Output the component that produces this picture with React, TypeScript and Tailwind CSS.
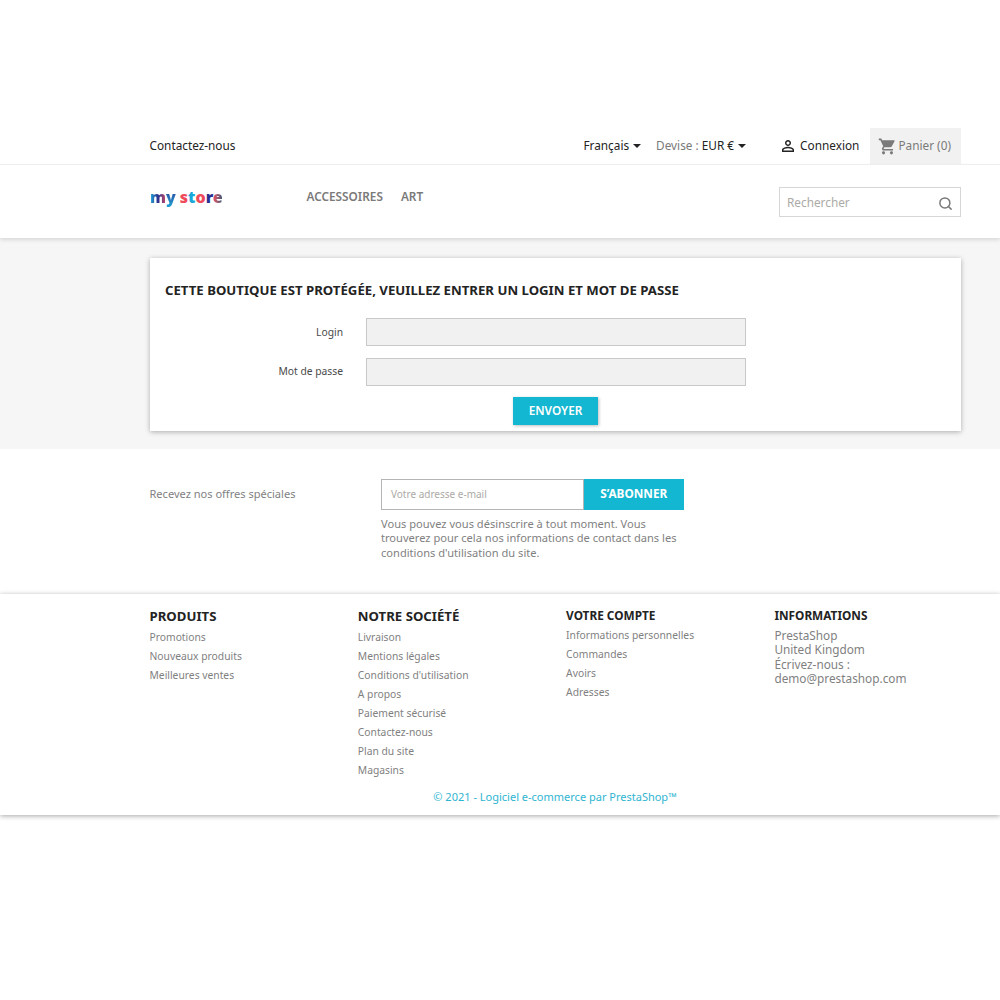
import React from 'react';
import { Search } from 'lucide-react';

const Caret: React.FC = () => (
  <span className="ml-[4px] inline-block h-0 w-0 border-x-[4px] border-t-[4px] border-x-transparent border-t-[#232323] align-[2px]" />
);

const UserIcon: React.FC = () => (
  <svg viewBox="0 0 24 24" className="h-[18px] w-[18px] fill-[#232323]">
    <path d="M12 5.9a2.1 2.1 0 1 1 0 4.2 2.1 2.1 0 0 1 0-4.2m0 9c2.97 0 6.1 1.46 6.1 2.1v1.1H5.9V17c0-.64 3.13-2.1 6.1-2.1M12 4C9.79 4 8 5.79 8 8s1.79 4 4 4 4-1.79 4-4-1.79-4-4-4zm0 9c-2.67 0-8 1.34-8 4v3h16v-3c0-2.66-5.33-4-8-4z" />
  </svg>
);

const CartIcon: React.FC = () => (
  <svg viewBox="0 0 24 24" className="h-[19px] w-[19px] fill-[#7a7a7a]">
    <path d="M7 18c-1.1 0-1.99.9-1.99 2S5.9 22 7 22s2-.9 2-2-.9-2-2-2zM1 2v2h2l3.6 7.59-1.35 2.45c-.16.28-.25.61-.25.96 0 1.1.9 2 2 2h12v-2H7.42c-.14 0-.25-.11-.25-.25l.03-.12.9-1.63h7.45c.75 0 1.41-.41 1.75-1.03l3.58-6.49A1 1 0 0 0 20.01 4H5.21l-.94-2H1zm16 16c-1.1 0-1.99.9-1.99 2s.89 2 1.99 2 2-.9 2-2-.9-2-2-2z" />
  </svg>
);

const Logo: React.FC = () => (
  <span className="font-['Noto_Sans'] text-[16px] leading-none font-black">
    <span className="bg-linear-to-r from-[#18a7d8] via-[#27308f] to-[#c8395f] bg-clip-text text-transparent">m</span>
    <span className="bg-linear-to-b from-[#27308f] to-[#18a7d8] bg-clip-text text-transparent">y</span>
    <span className="inline-block w-[4px]" />
    <span className="text-[#ef4a5c]">s</span>
    <span className="text-[#18a7d8]">t</span>
    <span className="text-[#ef4a5c]">o</span>
    <span className="text-[#27308f]">r</span>
    <span className="bg-linear-to-r from-[#ef4a5c] to-[#1f4f78] bg-clip-text text-transparent">e</span>
  </span>
);

const FooterLinks: React.FC<{ title: string; big?: boolean; links: string[] }> = ({ title, big, links }) => (
  <div className="w-[208.3px]">
    <h4 className={big ? 'pt-[11.5px] text-[13.2px] leading-[20px] font-bold text-[#232323]' : 'pt-[10.5px] text-[11.8px] leading-[20px] font-bold text-[#232323]'}>
      {title}
    </h4>
    <ul className={big ? 'pt-[2px] text-[10.3px] leading-[19px] text-[#7f7f7f]' : 'pt-[1px] text-[10.3px] leading-[19px] text-[#7f7f7f]'}>
      {links.map((l) => (
        <li key={l}>{l}</li>
      ))}
    </ul>
  </div>
);

const Field: React.FC<{ label: string }> = ({ label }) => (
  <div className="flex h-[28px] items-center">
    <label className="w-[178px] pt-[1px] text-right text-[10.3px] text-[#4a4a4a]">{label}</label>
    <div className="ml-[23px] h-[28px] w-[379.5px] border border-[#c8c8c8] bg-[#f1f1f1]" />
  </div>
);

const App: React.FC = () => {
  return (
    <div className="min-h-[1000px] w-[1000px] overflow-hidden bg-white font-['Noto_Sans',sans-serif]">
      <div className="h-[128px]" />

      {/* top nav */}
      <div className="h-[37px] border-b border-[#f1f1f1]">
        <div className="flex h-[36px] items-center pl-[149.5px] text-[11.8px] text-[#232323]">
          <span>Contactez-nous</span>
          <span className="ml-[348px]">Français<Caret /></span>
          <span className="ml-[15px] text-[#7a7a7a]">
            Devise : <span className="text-[#232323]">EUR €</span><Caret />
          </span>
          <span className="ml-[33px] flex items-center gap-[3px]">
            <UserIcon />
            <span>Connexion</span>
          </span>
          <div className="ml-[11px] flex h-[36px] w-[91px] items-center gap-[1px] bg-[#f1f1f1] pl-[8px] text-[#7a7a7a]">
            <CartIcon />
            <span>Panier (0)</span>
          </div>
        </div>
      </div>

      {/* header */}
      <div className="relative flex h-[73px] bg-white pl-[150px] shadow-[0_2px_4px_rgba(0,0,0,0.12)]">
        <div className="w-[156.5px] pt-[20px]">
          <Logo />
        </div>
        <nav className="flex gap-[18px] pt-[23px] text-[11.8px] leading-[16px] font-semibold text-[#7a7a7a]">
          <span>ACCESSOIRES</span>
          <span>ART</span>
        </nav>
        <div className="mt-[22px] mr-[39px] ml-auto flex h-[30px] w-[182px] items-center justify-between border border-[#d6d6d6] px-[7px] text-[11.8px] text-[#acaaa6]">
          <span className="pt-[1px]">Rechercher</span>
          <Search size={15} strokeWidth={2.4} className="mt-[2px] text-[#7a7a7a]" />
        </div>
      </div>

      {/* protected form */}
      <div className="h-[211px] bg-[#f6f6f6] pl-[150px] pt-[20px]">
        <div className="h-[173px] w-[811px] bg-white px-[15px] pt-[24px] shadow-[0_1px_5px_rgba(0,0,0,0.3)]">
          <h1 className="text-[13.2px] leading-[16px] font-bold text-[#232323]">
            CETTE BOUTIQUE EST PROTÉGÉE, VEUILLEZ ENTRER UN LOGIN ET MOT DE PASSE
          </h1>
          <div className="mt-[20px] flex flex-col gap-[11.5px]">
            <Field label="Login" />
            <Field label="Mot de passe" />
          </div>
          <div className="mt-[11.5px] ml-[348px] flex h-[28px] w-[85px] items-center justify-center bg-[#14b7d1] text-[11.8px] font-semibold text-white shadow-[1px_1px_3px_rgba(0,0,0,0.25)]">
            ENVOYER
          </div>
        </div>
      </div>

      {/* newsletter */}
      <div className="flex h-[145px] pl-[149.5px] pt-[30px]">
        <p className="w-[231.5px] pt-[7px] text-[11.05px] leading-[16px] text-[#7f7f7f]">Recevez nos offres spéciales</p>
        <div className="w-[303px]">
          <div className="flex h-[30.5px]">
            <div className="flex w-[203px] items-center border border-[#b5b5b5] pl-[9px] text-[10px] text-[#acaaa6]">
              Votre adresse e-mail
            </div>
            <div className="flex w-[99.5px] items-center justify-center bg-[#14b7d1] text-[11.8px] font-bold text-white">
              S’ABONNER
            </div>
          </div>
          <p className="mt-[7px] text-[11.1px] leading-[14.7px] text-[#7f7f7f]">
            Vous pouvez vous désinscrire à tout moment. Vous trouverez pour cela nos informations de contact dans les conditions d'utilisation du site.
          </p>
        </div>
      </div>

      {/* footer */}
      <div className="h-[221px] bg-white shadow-[0_1px_5px_rgba(0,0,0,0.35)]">
        <div className="flex h-[195px] pl-[149.5px]">
          <FooterLinks big title="PRODUITS" links={['Promotions', 'Nouveaux produits', 'Meilleures ventes']} />
          <FooterLinks
            big
            title="NOTRE SOCIÉTÉ"
            links={['Livraison', 'Mentions légales', "Conditions d'utilisation", 'A propos', 'Paiement sécurisé', 'Contactez-nous', 'Plan du site', 'Magasins']}
          />
          <FooterLinks title="VOTRE COMPTE" links={['Informations personnelles', 'Commandes', 'Avoirs', 'Adresses']} />
          <div className="w-[190px]">
            <h4 className="pt-[10.5px] text-[11.8px] leading-[20px] font-bold text-[#232323]">INFORMATIONS</h4>
            <p className="pt-[3px] text-[11.8px] leading-[14.6px] text-[#7f7f7f]">
              PrestaShop<br />United Kingdom<br />Écrivez-nous :<br />demo@prestashop.com
            </p>
          </div>
        </div>
        <p className="pl-[110px] text-center text-[11px] leading-[16px] text-[#2fb5d2]">© 2021 - Logiciel e-commerce par PrestaShop™</p>
      </div>
    </div>
  );
};

export default App;
